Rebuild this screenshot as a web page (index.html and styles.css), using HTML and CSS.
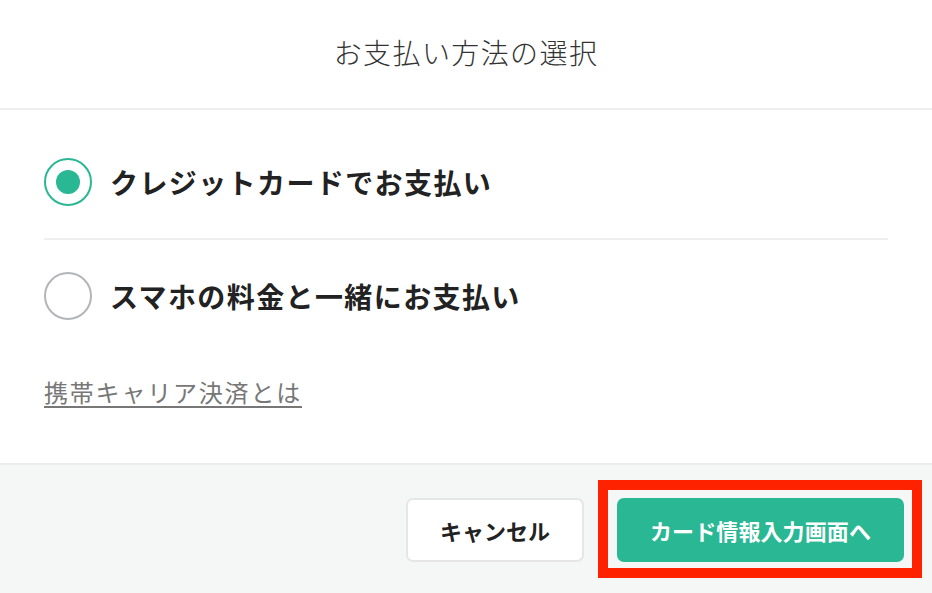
FILE: index.html
```html
<!DOCTYPE html>
<html lang="ja">
<head>
<meta charset="utf-8">
<title>お支払い方法の選択</title>
<link rel="stylesheet" href="styles.css">
</head>
<body>
<div class="dialog">
  <header class="header">
    <h1 class="title">お支払い方法の選択</h1>
  </header>
  <main class="main">
    <label class="option">
      <span class="radio radio-on"><span class="dot"></span></span>
      <span class="option-text">クレジットカードでお支払い</span>
    </label>
    <div class="divider"></div>
    <label class="option option-second">
      <span class="radio"></span>
      <span class="option-text">スマホの料金と一緒にお支払い</span>
    </label>
    <a class="link" href="#">携帯キャリア決済とは</a>
  </main>
  <footer class="footer">
    <button class="btn btn-cancel">キャンセル</button>
    <div class="primary-wrap">
      <button class="btn btn-primary">カード情報入力画面へ</button>
      <span class="highlight"></span>
    </div>
  </footer>
</div>
</body>
</html>
```
FILE: styles.css
```css
* { box-sizing: border-box; }
html, body { margin: 0; padding: 0; background: #fff; }
body {
  font-family: "Noto Sans CJK JP", "Noto Sans", sans-serif;
  color: #222;
  width: 932px;
  height: 593px;
  overflow: hidden;
}
.dialog { display: flex; flex-direction: column; height: 593px; }
.header {
  height: 110px;
  display: flex;
  align-items: center;
  justify-content: center;
  border-bottom: 2px solid #efefef;
  padding-bottom: 4px;
}
.title {
  margin: 0;
  font-size: 28px;
  font-weight: 300;
  letter-spacing: 1.4px;
  color: #333;
}
.main {
  height: 353px;
  padding: 48px 44px 0;
  display: flex;
  flex-direction: column;
}
.option {
  display: flex;
  align-items: center;
  gap: 18px;
  height: 48px;
}
.option-second { margin-top: 32px; }
.radio {
  width: 48px;
  height: 48px;
  border-radius: 50%;
  border: 2px solid #b3b5ba;
  display: flex;
  align-items: center;
  justify-content: center;
  flex: none;
}
.radio-on { border-color: #29b794; }
.dot {
  width: 24px;
  height: 24px;
  border-radius: 50%;
  background: #29b794;
}
.option-text {
  font-size: 28px;
  font-weight: 700;
  letter-spacing: 1.4px;
  color: #222;
}
.divider {
  margin-top: 32px;
  height: 2px;
  background: #efefef;
}
.link {
  margin-top: 56px;
  align-self: flex-start;
  font-size: 24px;
  line-height: 32px;
  letter-spacing: 1.8px;
  color: #777;
  text-decoration: underline;
  text-underline-offset: 4px;
}
.footer {
  flex: 1;
  background: #f5f7f7;
  border-top: 2px solid #ececec;
  display: flex;
  justify-content: flex-end;
  align-items: flex-start;
  gap: 33px;
  padding: 33px 28px 0 0;
}
.btn {
  height: 64px;
  border-radius: 7px;
  font-family: "Noto Sans CJK JP", "Noto Sans", sans-serif;
  font-size: 22px;
  font-weight: 700;
  padding: 0;
  white-space: nowrap;
  cursor: pointer;
}
.btn-cancel {
  width: 178px;
  background: #fff;
  border: 2px solid #e6e6e6;
  color: #222;
}
.btn-primary {
  width: 287px;
  background: #29b794;
  border: none;
  color: #fff;
  letter-spacing: 0.1px;
}
.primary-wrap { position: relative; display: flex; }
.highlight {
  position: absolute;
  top: -18px;
  left: -19px;
  right: -18px;
  bottom: -16px;
  border: 10px solid #ff2200;
  pointer-events: none;
}
```
